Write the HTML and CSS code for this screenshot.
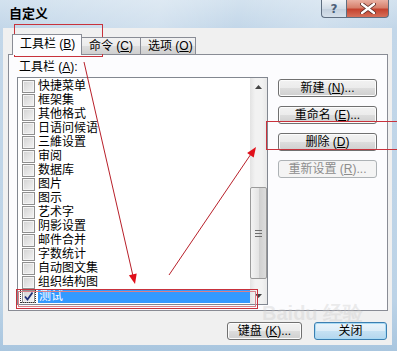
FILE: index.html
```html
<!DOCTYPE html>
<html>
<head>
<meta charset="utf-8">
<link rel="stylesheet" href="styles.css">
</head>
<body>
<div class="window">
  <div class="titlebar">
    <div class="title">自定义</div>
    <div class="caption-btns">
      <div class="cap help">?</div>
      <div class="cap close">
        <svg width="16" height="11" viewBox="0 0 16 11"><path d="M2 1 L14 10 M14 1 L2 10" stroke="#5a2a24" stroke-width="4" stroke-linecap="round"/><path d="M2 1 L14 10 M14 1 L2 10" stroke="#fff" stroke-width="2.4" stroke-linecap="round"/></svg>
      </div>
    </div>
  </div>
  <div class="client">
    <div class="tabs">
      <div class="tab active">工具栏 (<u>B</u>)</div>
      <div class="tab">命令 (<u>C</u>)</div>
      <div class="tab">选项 (<u>O</u>)</div>
    </div>
    <div class="panel">
      <div class="label">工具栏 (<u>A</u>):</div>
      <div class="panel-row">
        <div class="listbox">
          <div class="items">
            <div class="item"><span class="cb"></span><span class="txt">快捷菜单</span></div>
            <div class="item"><span class="cb"></span><span class="txt">框架集</span></div>
            <div class="item"><span class="cb"></span><span class="txt">其他格式</span></div>
            <div class="item"><span class="cb"></span><span class="txt">日语问候语</span></div>
            <div class="item"><span class="cb"></span><span class="txt">三維设置</span></div>
            <div class="item"><span class="cb"></span><span class="txt">审阅</span></div>
            <div class="item"><span class="cb"></span><span class="txt">数据库</span></div>
            <div class="item"><span class="cb"></span><span class="txt">图片</span></div>
            <div class="item"><span class="cb"></span><span class="txt">图示</span></div>
            <div class="item"><span class="cb"></span><span class="txt">艺术字</span></div>
            <div class="item"><span class="cb"></span><span class="txt">阴影设置</span></div>
            <div class="item"><span class="cb"></span><span class="txt">邮件合并</span></div>
            <div class="item"><span class="cb"></span><span class="txt">字数统计</span></div>
            <div class="item"><span class="cb"></span><span class="txt">自动图文集</span></div>
            <div class="item"><span class="cb"></span><span class="txt">组织结构图</span></div>
            <div class="item selected"><span class="focus"><span class="cb checked"><svg width="11" height="11" viewBox="0 0 11 11"><path d="M2 5.5 L4.5 8.5 L9.5 1.5" stroke="#1f2f7a" stroke-width="1.8" fill="none"/></svg></span></span><span class="txt">测试</span></div>
          </div>
          <div class="scrollbar">
            <div class="sb-arrow"><svg width="7" height="4" viewBox="0 0 7 4"><path d="M0 4 L3.5 0 L7 4 Z" fill="#444"/></svg></div>
            <div class="sb-track"></div>
            <div class="sb-thumb"><span class="grip"></span><span class="grip"></span><span class="grip"></span></div>
            <div class="sb-track small"></div>
            <div class="sb-arrow"><svg width="7" height="4" viewBox="0 0 7 4"><path d="M0 0 L3.5 4 L7 0 Z" fill="#444"/></svg></div>
          </div>
        </div>
        <div class="side-btns">
          <div class="btn">新建 (<u>N</u>)...</div>
          <div class="btn">重命名 (<u>E</u>)...</div>
          <div class="btn">删除 (<u>D</u>)</div>
          <div class="btn disabled">重新设置 (<u>R</u>)...</div>
        </div>
      </div>
    </div>
    <div class="footer">
      <div class="btn kbd">键盘 (<u>K</u>)...</div>
      <div class="btn default">关闭</div>
    </div>
  </div>
  <div class="watermark">Bai<span class="du">du</span> 经验</div>
  <svg class="annot" width="397" height="351" viewBox="0 0 397 351">
    <rect x="14.5" y="24.5" width="88" height="32" fill="none" stroke="#c8323c" stroke-width="1"/>
    <rect x="266.5" y="121.5" width="140" height="28" fill="none" stroke="#c8323c" stroke-width="1"/>
    <rect x="16.5" y="289.5" width="241" height="19" fill="none" stroke="#c8323c" stroke-width="1"/>
    <rect x="18.5" y="291.5" width="237" height="15" fill="none" stroke="#d98088" stroke-width="1"/>
    <line x1="84" y1="62" x2="133" y2="276" stroke="#b8202a" stroke-width="1"/>
    <polygon points="135,284 136.7,273.4 128.9,275.2" fill="#e0101a"/>
    <line x1="169" y1="275" x2="251" y2="154" stroke="#b8202a" stroke-width="1"/>
    <polygon points="256,147 253.7,157.5 247.1,153" fill="#e0101a"/>
  </svg>
</div>
</body>
</html>
```

FILE: styles.css
```css
* { box-sizing: border-box; }
body {
  margin: 0;
  font-family: "Liberation Sans", "Noto Sans CJK SC", sans-serif;
  font-size: 12px;
  color: #000;
}
u { text-decoration: underline; }
.window {
  position: relative;
  width: 397px;
  height: 351px;
  background: linear-gradient(#d3e2ef 0px, #c3d7e9 28px, #bcd3e7 300px, #a9c6df 351px);
  display: flex;
  flex-direction: column;
  overflow: hidden;
}
.titlebar {
  height: 28px;
  display: flex;
  justify-content: space-between;
  align-items: flex-start;
  padding-left: 9px;
  padding-right: 8px;
  background: linear-gradient(100deg, rgba(255,255,255,0.0) 0%, rgba(255,255,255,0.25) 40%, rgba(255,255,255,0) 60%, rgba(255,255,255,0.2) 80%, rgba(255,255,255,0) 100%);
}
.title {
  font-weight: bold;
  font-size: 13px;
  line-height: 16px;
  margin-top: 6px;
}
.caption-btns { display: flex; }
.cap {
  height: 18px;
  display: flex;
  align-items: center;
  justify-content: center;
  border: 1px solid #5f6e80;
  border-top: none;
}
.help {
  width: 25px;
  border-radius: 0 0 0 4px;
  border-right: none;
  background: linear-gradient(#eef2f6, #d2dce7 50%, #c2cfdd 51%, #d6e0ea);
  color: #4d5f78;
  font-family: "DejaVu Sans", sans-serif;
  font-weight: bold;
  font-size: 12px;
}
.close {
  width: 43px;
  border-radius: 0 0 4px 0;
  background: linear-gradient(#eab0a2, #d7806c 45%, #c5432f 55%, #d6705a);
}
.client {
  margin: 0 5px 0 3px;
  height: 317px;
  background: #f0f0f0;
  padding-top: 6px;
}
.tabs {
  display: flex;
  align-items: flex-end;
  height: 20px;
  margin-left: 9px;
  position: relative;
  z-index: 1;
}
.tab {
  height: 17px;
  border: 1px solid #898c95;
  border-bottom: none;
  border-left: none;
  background: linear-gradient(#f2f2f2, #ebebeb 50%, #dddddd 51%, #cfcfcf);
  display: flex;
  align-items: center;
  padding-left: 7px;
  line-height: 14px;
}
.tab:nth-child(2) { width: 59px; }
.tab:nth-child(3) { width: 55px; }
.tab.active {
  width: 70px;
  height: 21px;
  margin-bottom: -1px;
  border-left: 1px solid #898c95;
  background: #fcfcfe;
  padding-bottom: 2px;
}
.panel {
  margin-left: 5px;
  width: 380px;
  height: 257px;
  border: 1px solid #898c95;
  background: #fcfcfe;
}
.label {
  margin: 5px 0 0 10px;
  line-height: 14px;
  height: 14px;
}
.panel-row {
  display: flex;
  margin-top: 3px;
  margin-left: 8px;
}
.listbox {
  width: 251px;
  height: 228px;
  border: 1px solid #828790;
  background: #fff;
  display: flex;
}
.items {
  flex: 1;
  padding-top: 1px;
}
.item {
  height: 14px;
  display: flex;
  align-items: center;
  line-height: 14px;
}
.cb {
  width: 13px;
  height: 13px;
  margin-left: 4px;
  border: 1px solid #8f8f8f;
  background: linear-gradient(135deg, #d2d2d2, #f4f4f4);
  box-shadow: inset 0 0 0 1px #f4f4f4;
  display: flex;
  align-items: center;
  justify-content: center;
}
.txt {
  display: block;
  height: 14px;
  line-height: 14px;
  margin-left: 2px;
  padding-left: 1px;
}
.item.selected .txt {
  flex: 1;
  background: #3399ff;
  color: #fff;
}
.focus {
  display: flex;
  align-items: center;
  height: 14px;
  margin-left: 2px;
  padding: 0 1px 0 1px;
  outline: 1px dotted #333;
  outline-offset: -1px;
}
.focus .cb { margin-left: 1px; }
.scrollbar {
  width: 17px;
  display: flex;
  flex-direction: column;
  background: linear-gradient(90deg, #e3e3e3, #f2f2f2 30%, #f2f2f2 70%, #e8e8e8);
}
.sb-arrow {
  height: 17px;
  display: flex;
  align-items: center;
  justify-content: center;
}
.sb-track { height: 92px; }
.sb-track.small { height: 8px; }
.sb-thumb {
  height: 92px;
  border: 1px solid #9a9a9a;
  border-radius: 2px;
  background: linear-gradient(90deg, #f4f4f4, #e4e4e4 50%, #d0d0d0 55%, #dcdcdc);
  display: flex;
  flex-direction: column;
  align-items: center;
  justify-content: center;
  gap: 2px;
}
.grip {
  width: 7px;
  height: 1px;
  background: #6f6f6f;
}
.side-btns {
  display: flex;
  flex-direction: column;
  gap: 9px;
  margin-left: 10px;
  margin-top: 2px;
}
.btn {
  width: 99px;
  height: 18px;
  border: 1px solid #707070;
  border-radius: 3px;
  background: linear-gradient(#f2f2f2, #ebebeb 50%, #dddddd 51%, #cfcfcf);
  box-shadow: inset 0 0 0 1px #fcfcfc;
  display: flex;
  align-items: center;
  justify-content: center;
  line-height: 14px;
}
.btn.disabled {
  border-color: #adb2b5;
  background: #f4f4f4;
  color: #8d8d8d;
  box-shadow: none;
}
.footer {
  display: flex;
  justify-content: flex-end;
  gap: 12px;
  margin-top: 11px;
  padding-right: 5px;
}
.btn.kbd { width: 75px; }
.btn.default {
  width: 73px;
  border-color: #3c7fb1;
  background: linear-gradient(#eaf4fb, #dbecf7 50%, #c5e1f3 51%, #b4d6ee);
  box-shadow: inset 0 0 0 1px #a8daf4;
}
.watermark {
  position: absolute;
  left: 262px;
  top: 300px;
  font-family: "Liberation Sans", sans-serif;
  font-weight: bold;
  font-size: 20px;
  color: rgba(200, 200, 200, 0.35);
  pointer-events: none;
}
.annot {
  position: absolute;
  left: 0;
  top: 0;
  pointer-events: none;
}
```
